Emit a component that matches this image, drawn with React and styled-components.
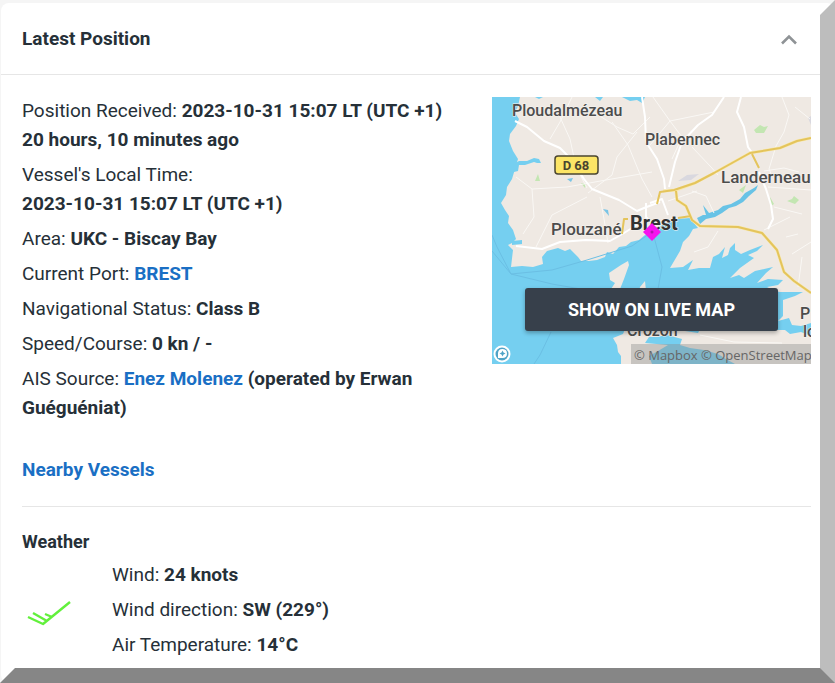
import React, { useState } from 'react';
import styled, { createGlobalStyle } from 'styled-components';

const colors = {
  text: '#263038',
  link: '#1a6fc4',
  line: '#e6e6e6',
  page: '#f5f5f5',
  button: '#37404b',
  sea: '#75cff0',
  land: '#efe9e3',
  road: '#ffffff',
  highway: '#e4c45c',
  park: '#c3e6b2',
  label: '#4c4c4c',
  wind: '#62f03c',
};

const GlobalStyle = createGlobalStyle`
  * {
    box-sizing: border-box;
  }
  body {
    margin: 0;
    background: ${colors.page};
    color: ${colors.text};
    font-family: Roboto, 'Liberation Sans', sans-serif;
    font-size: 19px;
    line-height: 29px;
  }
`;

const Page = styled.main`
  min-height: 100vh;
  display: flex;
  padding: 3px 0 0 1px;
`;

const Bevel = styled.div`
  position: fixed;
  inset: 0;
  border: 15px solid;
  border-color: transparent #bdbdbd #868686 transparent;
  pointer-events: none;
`;

const Card = styled.section`
  flex: 1;
  background: #fff;
  border-radius: 8px;
`;

const CardHeader = styled.header`
  display: flex;
  align-items: center;
  justify-content: space-between;
  height: 72px;
  padding: 0 37px 0 21px;
  border-bottom: 1px solid ${colors.line};
`;

const CardTitle = styled.h2`
  margin: 0;
  font-size: 19px;
  font-weight: 700;
`;

const ToggleButton = styled.button`
  display: flex;
  padding: 0;
  border: 0;
  background: none;
  cursor: pointer;
`;

const CardBody = styled.div`
  padding: 21px 24px 20px 21px;
`;

const PositionBlock = styled.div`
  display: grid;
  grid-template-columns: minmax(0, 1fr) 319px;
  gap: 24px;
  padding-bottom: 22px;
  border-bottom: 1px solid ${colors.line};
`;

const Details = styled.div`
  display: flex;
  flex-direction: column;
  gap: 6px;
`;

const Row = styled.p`
  margin: 0;
`;

const Value = styled.strong`
  display: ${({ $block }) => ($block ? 'block' : 'inline')};
  font-weight: 700;
`;

const StyledLink = styled.a`
  color: ${colors.link};
  font-weight: 700;
  text-decoration: none;
`;

const NearbyRow = styled(Row)`
  margin-top: 27px;
`;

const MapBox = styled.div`
  position: relative;
  align-self: start;
  height: 267px;
  margin-top: 1px;
  overflow: hidden;
`;

const MapButton = styled.button`
  position: absolute;
  right: 33px;
  bottom: 33px;
  left: 33px;
  height: 43px;
  border: 0;
  border-radius: 3px;
  background: ${colors.button};
  color: #fff;
  font-family: inherit;
  font-size: 18px;
  font-weight: 700;
  box-shadow: 0 2px 4px rgba(0, 0, 0, 0.3);
  cursor: pointer;
`;

const WeatherTitle = styled.h3`
  margin: 20px 0 4px;
  font-size: 18px;
  font-weight: 700;
`;

const WeatherBlock = styled.div`
  display: grid;
  grid-template-columns: 54px 1fr;
  align-items: center;
  gap: 36px;
`;

const ChevronUp = () => (
  <svg width="18" height="12" viewBox="0 0 18 12" aria-hidden="true">
    <path d="M2 10.5 L9 3.5 L16 10.5" fill="none" stroke="#8f9396" strokeWidth="2.6" />
  </svg>
);

const WindBarb = () => (
  <svg width="54" height="36" viewBox="0 0 54 36" aria-hidden="true">
    <path
      d="M48 10 L21 32 L6 25 M25 29 L11 21 M30 25 L23 22"
      fill="none"
      stroke={colors.wind}
      strokeWidth="2.4"
      strokeLinejoin="round"
    />
  </svg>
);

const BrestMap = () => (
  <svg width="319" height="267" viewBox="0 0 319 267" role="img" aria-label="Map of Brest">
    <rect width="319" height="267" fill={colors.sea} />
    {/* mainland */}
    <path
      fill={colors.land}
      d="M319 0 H51 L47 2 L43 0 H28 L26 9 L23 16 L27 22 L24 29 L18 37 L17 44 L21 54 L26 62 L23 72 L20 82
      L15 90 L14 98 L9 106 L13 113 L17 119 L16 126 L21 133 L24 142 L20 146 L16 148 L21 153 L19 170
      L30 169 L41 170 L51 167 L50 160 L55 154 L66 151 L73 154 L78 152 L86 160 L89 164 L97 164 L105 163
      L113 160 L115 155 L121 157 L127 150 L134 149 L139 145 L147 143 L153 138 L166 131 L172 127 L186 122
      L198 121 L206 131 L201 132 L197 139 L191 145 L188 154 L178 171 L191 170 L201 163 L196 173 L207 171
      L218 171 L221 160 L227 157 L233 150 L230 161 L236 158 L238 151 L243 146 L243 153 L249 157 L258 153
      L271 148 L265 154 L256 158 L262 161 L248 171 L238 181 L247 178 L252 181 L263 174 L281 170
      L274 176 L265 186 L276 182 L291 183 L286 188 L275 190 L283 194 L288 195 L311 195 L303 199 L291 203
      L291 219 L286 224 L297 221 L300 228 L309 229 L319 226 Z"
    />
    {/* southern shore */}
    <path
      fill={colors.land}
      d="M133 232 L131 237 L121 241 L125 248 L126 255 L129 259 V267 H319 V239 L309 235 L298 237 L293 233
      L284 233 L280 225 L212 225 L206 236 L180 232 Z"
    />
    <path
      fill={colors.sea}
      d="M153 246 L157 240 L165 240 L175 238 L190 242 L188 248 L198 251 L212 253 L226 257 L234 262 L243 267 H160 L157 259 L166 254 L176 248 Z"
    />
    <path fill={colors.land} d="M136 164 L129 168 L117 176 L118 183 L123 186 L119 192 H128 L132 182 L137 168 Z" />
    <path fill={colors.land} d="M153 184 L148 190 L147 194 H154 Z" />
    {/* inlets and rivers */}
    <path
      fill={colors.sea}
      d="M22 67 L27 64 L35 64 L42 61 L47 62 L49 66 L45 66 L42 65 L33 68 L27 68 L26 74 L22 75 Z
      M20 144 L30 143 L30 147 L20 148 Z M130 0 H153 L150 6 L145 3 L138 4 Z M103 0 H111 L108 4 Z"
    />
    <path
      fill="#68c3e6"
      d="M205 121 L211 118 L214 118 L211 108 L217 116 L226 113 L231 109 L239 107 L248 102 L253 96 L262 91
      L266 88 L264 93 L257 99 L251 105 L244 109 L237 111 L230 116 L223 120 L214 122 L208 127 Z"
    />
    <path fill="#79c4e6" d="M75 82 L81 81 L79 85 Z M111 112 L116 113 L117 119 Z" />
    <path fill="#d9d8df" d="M186 84 L195 78 L207 77 L199 83 Z M316 21 L319 19 V28 Z" />
    {/* woods */}
    <path
      fill={colors.park}
      d="M43 84 L46 77 L48 84 Z M89 86 L94 87 L93 91 Z M262 33 L268 28 L272 30 L276 29 L272 36 L264 36 Z
      M295 104 L300 102 L302 99 L307 103 L303 107 Z M278 100 L282 107 L279 109 Z M247 93 L254 88 L251 96 Z"
    />
    {/* minor roads */}
    <path
      fill="none"
      stroke="#faf8f5"
      strokeWidth="1"
      d="M80 0 L68 25 L58 42 M68 20 L78 42 L84 70 L95 91 M24 80 L40 92 L75 90 L114 83 L160 75
      M40 92 L42 120 L31 137 M120 25 L136 48 L150 82 L160 100 M145 35 L125 60 L120 78 L96 96
      M100 14 L125 30 L141 37 L158 20 M60 118 L95 100 M60 118 L44 150 M108 100 L112 122 L116 146
      M161 0 L178 24 L190 40 L180 62 M200 50 L219 70 L226 78 M178 24 L222 15 M178 24 L158 48
      M290 0 L297 18 L292 35 L284 49 L277 72 L280 79 M303 10 L318 22 M276 90 L319 93 M272 74 L292 71 L307 75
      M200 94 L214 99 L222 116 M176 104 L205 94 M282 110 L310 117 M226 134 L216 150 L202 155 M272 133 L298 120
      M300 157 L319 145 M310 160 L306 190 M294 140 L306 137 M208 238 L242 245 L290 246"
    />
    {/* main roads */}
    <path
      fill="none"
      stroke={colors.road}
      strokeWidth="2"
      strokeLinejoin="round"
      d="M23 24 L35 30 L52 44 L68 51 L79 62 L92 82 L100 92 L127 103 L145 114 L152 111 L168 105
      M150 0 L153 20 L154 45 L165 62 L172 82 L173 92 M232 0 L220 18 L206 28 L190 45 L183 65 L177 90
      M249 0 L245 15 L252 30 L256 50 L261 57 M267 75 L274 92 L279 108 L281 122 L276 132
      M24 149 L50 152 L68 145 L94 143 L118 144 L132 136 L148 126 M154 106 L154 120 L163 130 M158 106 L170 102 L176 118"
    />
    <path
      fill="none"
      stroke="#f8e9ad"
      strokeWidth="3"
      strokeLinejoin="round"
      d="M171 94 L184 93 L203 86 L222 76 L258 56 L288 51 L305 44 L319 41 M184 94 L185 103 L194 109 L200 123 L208 129 L246 130 L270 136 L285 153 L292 175 L302 184 L319 196"
    />
    <path
      fill="none"
      stroke={colors.highway}
      strokeWidth="2"
      strokeLinejoin="round"
      d="M165 107 L168 95 L182 93 L203 86 L222 76 L258 56 L288 51 L305 44 L319 41 M184 94 L185 103 L194 109 L200 123
      L208 129 L246 130 L270 136 L285 153 L292 175 L302 184 L319 196 M260 57 L267 71 M186 121 L199 119 M130 137 L132 122 L136 122"
    />
    {/* ferry lines */}
    <path
      fill="none"
      stroke="#6bbfe4"
      strokeWidth="1"
      d="M160 135 L140 149 L95 163 L60 173 L19 177 L5 150 L0 138 M19 177 L60 187 L100 194 M0 154 L19 177
      M161 136 L170 170 L166 192 M59 235 L48 258 L42 267"
    />
    <g
      fill={colors.label}
      fontFamily="Roboto, sans-serif"
      fontSize="16"
      fontWeight="500"
      stroke="#f7f4f0"
      strokeWidth="1"
      paintOrder="stroke"
    >
      <text x="20" y="19">Ploudalmézeau</text>
      <text x="153" y="48">Plabennec</text>
      <text x="229" y="86" fontSize="17">
        Landerneau
      </text>
      <text x="59" y="138" fontSize="17">
        Plouzané
      </text>
      <text x="135" y="239">Crozon</text>
      <text x="308" y="222">P</text>
      <text x="311" y="240">lo</text>
      <text x="138" y="133" fontSize="20" fontWeight="700" fill="#333">
        Brest
      </text>
    </g>
    <rect x="63" y="59" width="43" height="18" rx="3" fill="#fce566" stroke="#4a4530" strokeWidth="1.5" />
    <text x="84" y="73" textAnchor="middle" fill="#4a4530" fontFamily="Roboto, sans-serif" fontSize="13" fontWeight="700">
      D 68
    </text>
    <path d="M160 126 L169 135 L160 144 L151 135 Z" fill="#f613ee" />
    <circle cx="160" cy="135" r="1.5" fill="#b312ae" />
    {/* map provider mark */}
    <circle cx="10" cy="257" r="8.5" fill="#fff" />
    <circle cx="10" cy="257" r="6.5" fill="#4fa3c7" />
    <path d="M6 261 V256 A4.5 4.5 0 1 1 10.5 261 Z" fill="#fff" />
    <path d="M10.5 253.500 L11.500 255.500 L13.500 256.500 L11.500 257.500 L10.500 259.500 L9.500 257.500 L7.500 256.500 L9.500 255.500 Z" fill="#4fa3c7" />
    <rect x="139" y="247" width="180" height="20" fill="#8d8d8d" fillOpacity="0.4" />
    <text x="142" y="263" fill="#666" fontFamily="'Open Sans', sans-serif" fontSize="13">
      © Mapbox © OpenStreetMap
    </text>
  </svg>
);

const App = () => {
  const [open, setOpen] = useState(true);

  return (
    <Page>
      <GlobalStyle />
      <Card>
        <CardHeader>
          <CardTitle>Latest Position</CardTitle>
          <ToggleButton
            type="button"
            aria-label="Toggle latest position"
            aria-expanded={open}
            onClick={() => setOpen(!open)}
          >
            <ChevronUp />
          </ToggleButton>
        </CardHeader>
        {open && (
          <CardBody>
            <PositionBlock>
              <Details>
                <Row>
                  Position Received: <Value>2023-10-31 15:07 LT (UTC +1)</Value>
                  <Value $block>20 hours, 10 minutes ago</Value>
                </Row>
                <Row>
                  Vessel&apos;s Local Time: <Value $block>2023-10-31 15:07 LT (UTC +1)</Value>
                </Row>
                <Row>
                  Area: <Value>UKC - Biscay Bay</Value>
                </Row>
                <Row>
                  Current Port: <StyledLink href="#port">BREST</StyledLink>
                </Row>
                <Row>
                  Navigational Status: <Value>Class B</Value>
                </Row>
                <Row>
                  Speed/Course: <Value>0 kn / -</Value>
                </Row>
                <Row>
                  AIS Source: <StyledLink href="#station">Enez Molenez</StyledLink>{' '}
                  <Value>(operated by Erwan Guéguéniat)</Value>
                </Row>
                <NearbyRow>
                  <StyledLink href="#nearby">Nearby Vessels</StyledLink>
                </NearbyRow>
              </Details>
              <MapBox>
                <BrestMap />
                <MapButton type="button">SHOW ON LIVE MAP</MapButton>
              </MapBox>
            </PositionBlock>
            <WeatherTitle>Weather</WeatherTitle>
            <WeatherBlock>
              <WindBarb />
              <Details>
                <Row>
                  Wind: <Value>24 knots</Value>
                </Row>
                <Row>
                  Wind direction: <Value>SW (229°)</Value>
                </Row>
                <Row>
                  Air Temperature: <Value>14°C</Value>
                </Row>
              </Details>
            </WeatherBlock>
          </CardBody>
        )}
      </Card>
      <Bevel />
    </Page>
  );
};

export default App;
